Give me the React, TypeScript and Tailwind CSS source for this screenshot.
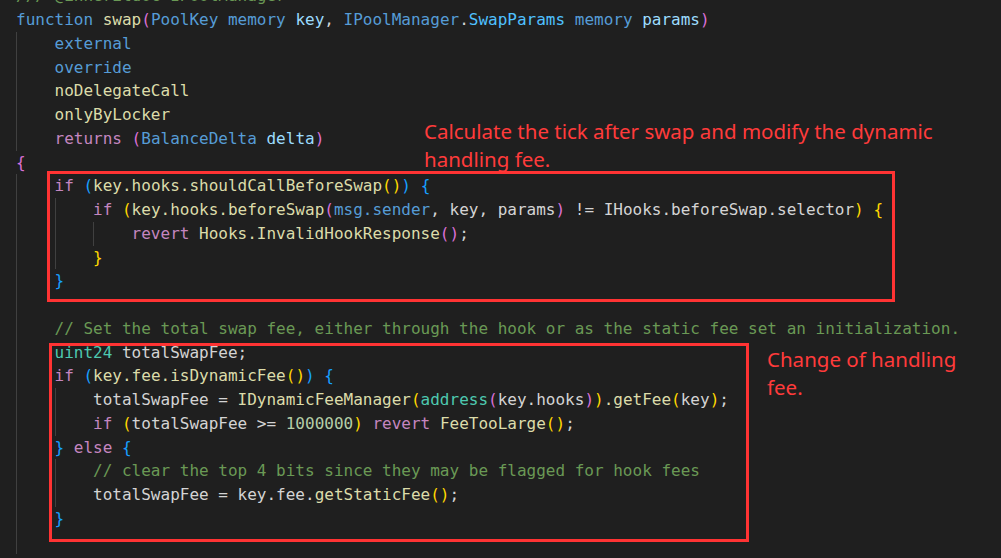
import React from 'react';

type Tok = [string, string];

// vs code dark palette
const C = 'text-[#6a9955]';
const K = 'text-[#569cd6]';
const F = 'text-[#dcdcaa]';
const V = 'text-[#9cdcfe]';
const P = 'text-[#c586c0]';
const T = 'text-[#4ec9b0]';
const N = 'text-[#b5cea8]';
const D = 'text-[#d4d4d4]';
const B1 = 'text-[#ffd700]';
const B2 = 'text-[#da70d6]';
const B3 = 'text-[#179fff]';

const lines: { indent: number; toks: Tok[] }[] = [
  { indent: 0, toks: [['/// @inheritdoc IPoolManager', C]] },
  {
    indent: 0,
    toks: [
      ['function', K], [' ', D], ['swap', F], ['(', B2], ['PoolKey', K], [' memory', K], [' key', V], [', ', D],
      ['IPoolManager', K], ['.', D], ['SwapParams', 'text-[#4fc1ff]'], [' memory', K], [' params', V], [')', B2],
    ],
  },
  { indent: 1, toks: [['external', K]] },
  { indent: 1, toks: [['override', K]] },
  { indent: 1, toks: [['noDelegateCall', F]] },
  { indent: 1, toks: [['onlyByLocker', F]] },
  { indent: 1, toks: [['returns', P], [' ', D], ['(', B2], ['BalanceDelta', K], [' delta', V], [')', B2]] },
  { indent: 0, toks: [['{', B2]] },
  {
    indent: 1,
    toks: [['if', P], [' ', D], ['(', B3], ['key.hooks.shouldCallBeforeSwap', F], ['(', B1], [')', B1], [')', B3], [' ', D], ['{', B3]],
  },
  {
    indent: 2,
    toks: [
      ['if', P], [' ', D], ['(', B1], ['key.hooks.beforeSwap', F], ['(', B2], ['msg.sender', K], [', key, params', D], [')', B2],
      [' != IHooks.beforeSwap.selector', D], [')', B1], [' ', D], ['{', B1],
    ],
  },
  { indent: 3, toks: [['revert', P], [' Hooks.InvalidHookResponse', F], ['(', B2], [')', B2], [';', D]] },
  { indent: 2, toks: [['}', B1]] },
  { indent: 1, toks: [['}', B3]] },
  { indent: 1, toks: [] },
  { indent: 1, toks: [['// Set the total swap fee, either through the hook or as the static fee set an initialization.', C]] },
  { indent: 1, toks: [['uint24', T], [' totalSwapFee;', D]] },
  {
    indent: 1,
    toks: [['if', P], [' ', D], ['(', B3], ['key.fee.isDynamicFee', F], ['(', B1], [')', B1], [')', B3], [' ', D], ['{', B3]],
  },
  {
    indent: 2,
    toks: [
      ['totalSwapFee = ', D], ['IDynamicFeeManager', F], ['(', B1], ['address', T], ['(', B2], ['key.hooks', D], [')', B2], [')', B1],
      ['.getFee', F], ['(', B1], ['key', D], [')', B1], [';', D],
    ],
  },
  {
    indent: 2,
    toks: [
      ['if', P], [' ', D], ['(', B1], ['totalSwapFee >= ', D], ['1000000', N], [')', B1], [' ', D], ['revert', P],
      [' FeeTooLarge', F], ['(', B1], [')', B1], [';', D],
    ],
  },
  { indent: 1, toks: [['}', B3], [' ', D], ['else', P], [' ', D], ['{', B3]] },
  { indent: 2, toks: [['// clear the top 4 bits since they may be flagged for hook fees', C]] },
  { indent: 2, toks: [['totalSwapFee = key.fee.', D], ['getStaticFee', F], ['(', B1], [')', B1], [';', D]] },
  { indent: 1, toks: [['}', B3]] },
  { indent: 1, toks: [] },
];

function CodeLine({ indent, toks }: { indent: number; toks: Tok[] }) {
  return (
    <div className="h-[23.76px] leading-[23.76px] whitespace-pre flex items-stretch">
      {Array.from({ length: indent }).map((_, i) => (
        <span key={i} className="inline-block w-[4ch] border-l border-[#404040] shrink-0" />
      ))}
      <span>
        {toks.map(([t, c], i) => (
          <span key={i} className={c}>{t}</span>
        ))}
      </span>
    </div>
  );
}

function Note({ lines: ls }: { lines: string[] }) {
  return (
    <div
      className="text-[#ff3b3b] text-[20.5px] leading-[28px]"
      style={{ fontFamily: "'Noto Sans', 'Open Sans', sans-serif" }}
    >
      {ls.map((l, i) => (
        <div key={i}>{l}</div>
      ))}
    </div>
  );
}

export default function App() {
  return (
    <div className="w-[1001px] h-[558px] bg-[#1f1f1f] relative overflow-hidden">
      {/* code */}
      <div
        className="pl-[16px] mt-[-15.6px] text-[16px] text-[#d4d4d4]"
        style={{ fontFamily: "'DejaVu Sans Mono', 'Liberation Mono', monospace" }}
      >
        {lines.map((l, i) => (
          <CodeLine key={i} indent={l.indent} toks={l.toks} />
        ))}
      </div>

      {/* annotation boxes drawn over the code */}
      <div className="absolute left-[47px] top-[171px] w-[848px] h-[131px] border-[3px] border-[#ff3333]" />
      <div className="absolute left-[49px] top-[343px] w-[700px] h-[199px] border-[3px] border-[#ff3333]" />

      {/* annotation notes */}
      <div className="absolute left-[424px] top-[117px]">
        <Note lines={['Calculate the tick after swap and modify the dynamic', 'handling fee.']} />
      </div>
      <div className="absolute left-[767px] top-[345px]">
        <Note lines={['Change of handling', 'fee.']} />
      </div>
    </div>
  );
}
